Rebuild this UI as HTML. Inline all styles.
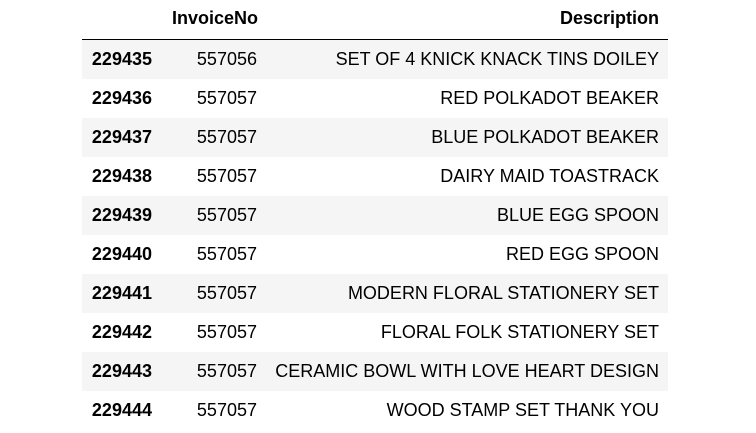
<!DOCTYPE html>
<html><head><meta charset="utf-8"><style>
body{margin:0;width:756px;height:433px;background:#fff;font-family:"Liberation Sans",Arial,sans-serif;color:#000;font-size:18px;position:relative;overflow:hidden}
.h{position:absolute;top:8px;font-weight:bold;line-height:20px}
.line{position:absolute;left:82px;width:586px;top:39px;height:1px;background:#000}
.r{position:absolute;left:82px;width:586px;height:39px;line-height:39px}
.r.s{background:#f5f5f5}
.r span{position:absolute;top:0;text-align:right;white-space:nowrap}
.i{left:0;width:70px;font-weight:bold}
.n{left:100px;width:75px}
.d{left:150px;width:427px}
</style></head><body>
<div class="h" style="left:160px;width:98px;text-align:right">InvoiceNo</div>
<div class="h" style="left:460px;width:199px;text-align:right">Description</div>
<div class="line"></div>
<div class="r s" style="top:40px"><span class="i">229435</span><span class="n">557056</span><span class="d">SET OF 4 KNICK KNACK TINS DOILEY</span></div>
<div class="r" style="top:79px"><span class="i">229436</span><span class="n">557057</span><span class="d">RED POLKADOT BEAKER</span></div>
<div class="r s" style="top:118px"><span class="i">229437</span><span class="n">557057</span><span class="d">BLUE POLKADOT BEAKER</span></div>
<div class="r" style="top:157px"><span class="i">229438</span><span class="n">557057</span><span class="d">DAIRY MAID TOASTRACK</span></div>
<div class="r s" style="top:196px"><span class="i">229439</span><span class="n">557057</span><span class="d">BLUE EGG SPOON</span></div>
<div class="r" style="top:235px"><span class="i">229440</span><span class="n">557057</span><span class="d">RED EGG SPOON</span></div>
<div class="r s" style="top:274px"><span class="i">229441</span><span class="n">557057</span><span class="d">MODERN FLORAL STATIONERY SET</span></div>
<div class="r" style="top:313px"><span class="i">229442</span><span class="n">557057</span><span class="d">FLORAL FOLK STATIONERY SET</span></div>
<div class="r s" style="top:352px"><span class="i">229443</span><span class="n">557057</span><span class="d">CERAMIC BOWL WITH LOVE HEART DESIGN</span></div>
<div class="r" style="top:391px"><span class="i">229444</span><span class="n">557057</span><span class="d">WOOD STAMP SET THANK YOU</span></div>
</body></html>
